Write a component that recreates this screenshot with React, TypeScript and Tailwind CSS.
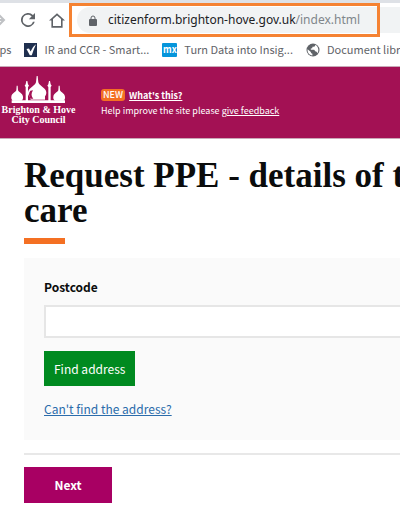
import React from 'react';

const bookmarks = [
  { id: 'ir', label: 'IR and CCR - Smart...', icon: SmartIcon },
  { id: 'mx', label: 'Turn Data into Insig...', icon: MxIcon },
  { id: 'doc', label: 'Document library', icon: GlobeIcon },
];

function SmartIcon() {
  return (
    <svg viewBox="0 0 13 14" className="h-[14px] w-[13px] shrink-0" aria-hidden="true">
      <rect width="13" height="14" fill="#20304f" />
      <path d="M2.5 6 5 5.6 6.6 8.4 Q8 4 12 1.2 Q9.6 6.5 7.8 12.2 L5.8 12.2Z" fill="#fff" />
    </svg>
  );
}

function MxIcon() {
  return (
    <span className="flex h-[14px] w-[15px] shrink-0 items-center justify-center rounded-[1px] bg-[#0595db] text-[9px] leading-none font-bold text-white">
      mx
    </span>
  );
}

function GlobeIcon() {
  return (
    <svg viewBox="0 0 14 14" className="h-[14px] w-[14px] shrink-0" aria-hidden="true">
      <circle cx="7" cy="7" r="6.500" fill="#5f6368" />
      <path
        d="M9.200 1.800C9.400 3 8.800 3.700 7.600 3.800H6.500L6.200 5.300 4.800 5.600V6.700H8.200L9.200 8.300 10.600 8.700 11.500 10.200C13 8 12.800 3.800 9.200 1.800ZM1.600 6.300 4.600 8.800 5.300 10.200 6.400 10.700V12.500C3.200 12.300 1.200 9.500 1.600 6.300Z"
        fill="#fff"
      />
    </svg>
  );
}

function CouncilLogo() {
  return (
    <a
      href="#home"
      className="-ml-px flex w-[79px] shrink-0 flex-col items-center pb-[5px] font-['Liberation_Serif',serif] text-[10px] leading-[10px] font-bold whitespace-nowrap text-white"
    >
      <svg viewBox="34 21 165 81" className="mb-[2px] h-[27px] w-[55px]" fill="#fff" aria-hidden="true">
        {/* central dome and its drum */}
        <path d="M111 21h3l2 19c2 7 10 12 17 18 9 8 9 18 2 25H90c-7-7-7-17 2-25 7-6 15-11 17-18Z" />
        <path d="M92 80h44v12h-44Z" />
        <path d="M92 65c-6 7-5 17 1 24h8c-7-7-7-16-1-25Z" fill="#a31154" />
        {/* minarets */}
        <path d="M80 36h3l2 10 3 4-3 4v42h-7V54l-3-4 3-4ZM148 36h3l2 10 3 4-3 4v42h-7V54l-3-4 3-4Z" />
        {/* side domes */}
        <path d="M51 50h3l1 14c3 6 14 10 15 19 1 5-1 9-4 12H40c-4-3-6-7-5-12 1-9 12-13 15-19ZM177 50h3l1 14c3 6 14 10 15 19 1 5-1 9-4 12h-26c-4-3-6-7-5-12 1-9 12-13 15-19Z" />
        <path d="M36 94h160v8H36Z" />
        <path d="M72 84h4v9h-4ZM88 88h4v5h-4ZM138 88h5v5h-5ZM156 84h4v9h-4Z" fill="#a31154" />
      </svg>
      <span>Brighton &amp; Hove</span>
      <span>City Council</span>
    </a>
  );
}

function BrowserBar() {
  return (
    <div className="border-t-[3px] border-[#dee1e6] bg-white font-['Noto_Sans',sans-serif]">
      <div className="flex h-[34px] items-center">
        <button aria-label="Forward" className="-ml-2 shrink-0">
          <svg viewBox="0 0 14 14" className="h-[14px] w-[14px]" fill="none" stroke="#bfc1c4" strokeWidth="2">
            <path d="M1 7h11M7 2l5 5-5 5" />
          </svg>
        </button>
        <button aria-label="Reload" className="ml-[15px] shrink-0">
          <svg viewBox="4 4 16 16" className="h-[14px] w-[14px]" fill="#5f6368">
            <path d="M17.650 6.350A8 8 0 1 0 19.730 14h-2.080A6 6 0 1 1 12 6c1.660 0 3.140.69 4.220 1.780L13 11h7V4z" />
          </svg>
        </button>
        <button aria-label="Home" className="ml-[14px] shrink-0">
          <svg viewBox="2 3 20 18" className="h-[15px] w-[16px]" fill="#5f6368" fillRule="evenodd">
            <path d="M12 3 2 12h3v9h14v-9h3ZM12 5.700l5 4.500V18.800H7v-8.600Z" />
          </svg>
        </button>
        <div className="relative ml-3 flex h-[26px] min-w-0 flex-1 items-center rounded-l-full bg-[#f1f3f4] pl-3">
          <svg viewBox="0 0 8 11" className="h-[11px] w-[8px] shrink-0" aria-hidden="true">
            <rect y="4" width="8" height="7" rx="1" fill="#5f6368" />
            <path d="M2 4.500V3a2 2 0 0 1 4 0v1.500" fill="none" stroke="#5f6368" />
          </svg>
          <span className="ml-[11px] text-[12px] whitespace-nowrap text-[#202124]">
            citizenform.brighton-hove.gov.uk<span className="text-[#80868b]">/index.html</span>
          </span>
          <span className="absolute -top-1 -left-2 h-[34px] w-[311px] border-[3px] border-[#f58232]" />
        </div>
      </div>
      <nav className="flex h-[29px] items-center gap-[13px] overflow-hidden pb-[4px] font-['Noto_Sans_CJK_JP',sans-serif] text-[11px] whitespace-nowrap text-[#5f6368]">
        <a href="#apps" className="-ml-[14px]">Apps</a>
        {bookmarks.map((mark) => (
          <a key={mark.id} href={`#${mark.id}`} className="flex shrink-0 items-center gap-[7px]">
            <mark.icon />
            {mark.label}
          </a>
        ))}
      </nav>
    </div>
  );
}

export default function App() {
  return (
    <div className="min-h-screen overflow-hidden bg-white font-['Noto_Sans_CJK_JP',sans-serif] text-[#0b0c0c]">
      <BrowserBar />
      <header className="flex h-[73px] items-center border-y border-[#c9a9b8] bg-[#a31154]">
        <CouncilLogo />
        <div className="ml-[23px] text-[9px] leading-[15px] text-white">
          <p className="flex items-center gap-1 font-bold">
            <span className="rounded-[3px] bg-[#f47023] px-[2px] leading-[12px] font-medium">NEW</span>
            <a href="#whats-this" className="underline">What's this?</a>
          </p>
          <p>
            Help improve the site please <a href="#feedback" className="underline">give feedback</a>
          </p>
        </div>
      </header>

      <main className="pt-[19px] pl-6">
        <h1 className="font-['Liberation_Serif',serif] text-[35px] leading-[35px] font-bold">
          <span className="block whitespace-nowrap">Request PPE - details of the</span>
          <span className="block">care</span>
        </h1>
        <div className="mt-[10px] h-[6px] w-[41px] bg-[#f47023]" />

        <form className="mt-[14px]" onSubmit={(e) => e.preventDefault()}>
          <section className="bg-[#fafafa] pt-5 pb-[22px] pl-5 text-[12px] leading-[18px]">
            <label htmlFor="postcode" className="block font-bold">Postcode</label>
            <input
              id="postcode"
              type="text"
              className="mt-[9px] block h-[33px] w-full border-2 border-r-0 border-[#e6e6e6] bg-white px-2"
            />
            <button type="button" className="mt-[13px] block h-[35px] bg-[#008a20] px-[10px] text-white">
              Find address
            </button>
            <a href="#manual" className="mt-[14px] inline-block text-[#2b6cab] underline">Can't find the address?</a>
          </section>
          <hr className="mt-[13px] border-t-2 border-[#e8e8e8]" />
          <button type="submit" className="mt-3 h-[36px] w-[88px] bg-[#a80063] text-[12px] font-bold text-white">
            Next
          </button>
        </form>
      </main>
    </div>
  );
}
